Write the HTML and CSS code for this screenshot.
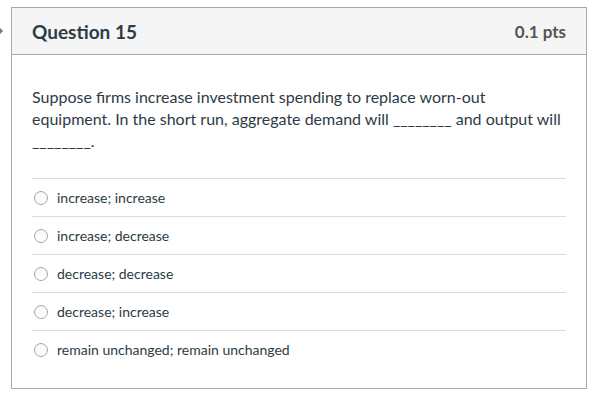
FILE: index.html
```html
<!DOCTYPE html>
<html lang="en">
<head>
<meta charset="utf-8">
<title>Question 15</title>
<link rel="stylesheet" href="styles.css">
</head>
<body>
<div class="page">
  <div class="marker"><span class="marker-tip"></span></div>
  <div class="question">
    <div class="q-header">
      <h2 class="q-title">Question 15</h2>
      <span class="q-points">0.1 pts</span>
    </div>
    <div class="q-body">
      <p class="q-text">Suppose firms increase investment spending to replace worn-out equipment. In the short run, aggregate demand will ________ and output will ________.</p>
      <ul class="answers">
        <li class="answer"><span class="radio"></span><span class="answer-label">increase; increase</span></li>
        <li class="answer"><span class="radio"></span><span class="answer-label">increase; decrease</span></li>
        <li class="answer"><span class="radio"></span><span class="answer-label">decrease; decrease</span></li>
        <li class="answer"><span class="radio"></span><span class="answer-label">decrease; increase</span></li>
        <li class="answer"><span class="radio"></span><span class="answer-label">remain unchanged; remain unchanged</span></li>
      </ul>
    </div>
  </div>
</div>
</body>
</html>
```
FILE: styles.css
```css
* { box-sizing: border-box; }
html, body { margin: 0; padding: 0; background: #fff; }
body {
  font-family: Lato, "Open Sans", "Liberation Sans", sans-serif;
  color: #2d3b45;
}
.page {
  display: flex;
  align-items: flex-start;
  padding-top: 7px;
}
.marker {
  width: 11px;
  flex: none;
  padding-top: 21px;
}
.marker-tip {
  display: block;
  width: 0;
  height: 0;
  border-top: 3px solid transparent;
  border-bottom: 3px solid transparent;
  border-left: 3px solid #5b7b94;
}
.question {
  width: 576px;
  border: 1px solid #a9a9a9;
  background: #fff;
}
.q-header {
  display: flex;
  justify-content: space-between;
  align-items: center;
  height: 47px;
  padding: 0 20px;
  background: #f5f5f5;
  border-bottom: 1px solid #a9a9a9;
}
.q-title {
  margin: 0;
  font-size: 19px;
  font-weight: 700;
  color: #2d3b45;
}
.q-points {
  font-size: 17px;
  font-weight: 700;
  color: #555;
}
.q-body {
  padding: 31px 20px 20px;
}
.q-text {
  margin: 0 0 26px;
  font-size: 16px;
  line-height: 22px;
  color: #2d3b45;
}
.answers {
  list-style: none;
  margin: 0;
  padding: 0;
}
.answer {
  display: flex;
  align-items: center;
  height: 38px;
  border-top: 1px solid #dcdcdc;
  font-size: 14px;
  color: #2d3b45;
}
.radio {
  width: 14px;
  height: 14px;
  margin-left: 2px;
  margin-right: 9px;
  border: 1px solid #a5a5a5;
  border-radius: 50%;
  background: linear-gradient(#f6f6f6, #fff);
  flex: none;
}
```
